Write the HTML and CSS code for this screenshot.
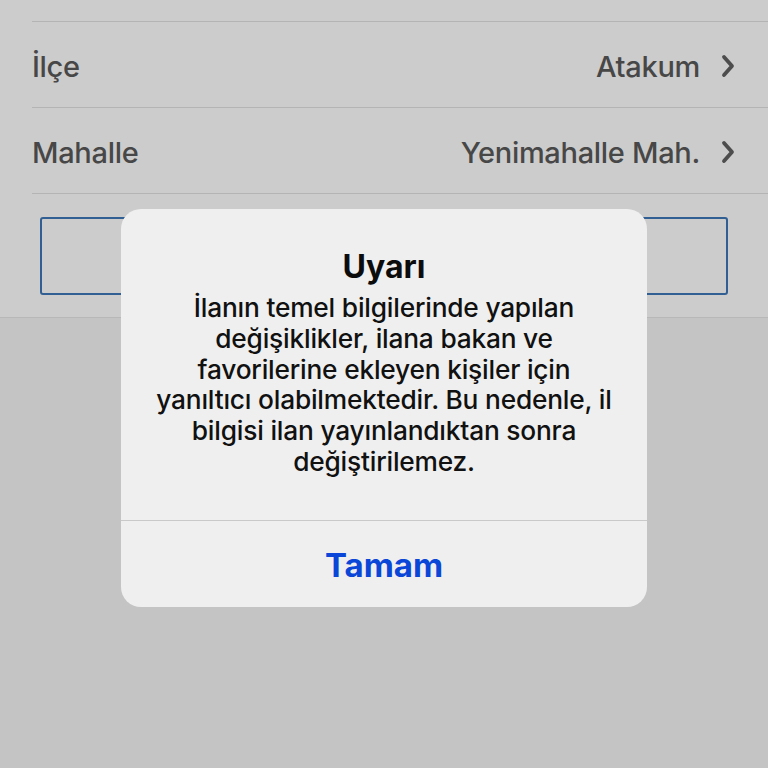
FILE: index.html
```html
<!DOCTYPE html>
<html lang="tr">
<head>
<meta charset="utf-8">
<link rel="stylesheet" href="styles.css">
</head>
<body>
<div class="screen">
  <div class="list">
    <div class="row row-cut"></div>
    <div class="row">
      <span class="label">İlçe</span>
      <span class="value">Atakum
        <svg class="chev" viewBox="0 0 16 24" width="16" height="24"><path d="M4 3 L12 12 L4 21" fill="none" stroke="#4d4d4d" stroke-width="3.8" stroke-linecap="round" stroke-linejoin="round"/></svg>
      </span>
    </div>
    <div class="row">
      <span class="label">Mahalle</span>
      <span class="value">Yenimahalle Mah.
        <svg class="chev" viewBox="0 0 16 24" width="16" height="24"><path d="M4 3 L12 12 L4 21" fill="none" stroke="#4d4d4d" stroke-width="3.8" stroke-linecap="round" stroke-linejoin="round"/></svg>
      </span>
    </div>
  </div>
  <div class="actions">
    <div class="outline-btn"></div>
  </div>
  <div class="rest"></div>

  <div class="alert">
    <div class="alert-body">
      <div class="alert-title">Uyarı</div>
      <div class="alert-msg">İlanın temel bilgilerinde yapılan<br>değişiklikler, ilana bakan ve<br>favorilerine ekleyen kişiler için<br>yanıltıcı olabilmektedir. Bu nedenle, il<br>bilgisi ilan yayınlandıktan sonra<br>değiştirilemez.</div>
    </div>
    <div class="alert-btn">Tamam</div>
  </div>
</div>
</body>
</html>
```
FILE: styles.css
```css
html, body {
  margin: 0;
  padding: 0;
}
body {
  width: 768px;
  height: 768px;
  overflow: hidden;
  font-family: Inter, "Noto Sans", "Liberation Sans", sans-serif;
  background: #c4c4c4;
}
.screen {
  position: relative;
  width: 768px;
  height: 768px;
  display: flex;
  flex-direction: column;
}
.list {
  background: #cccccc;
  padding-left: 32px;
}
.row {
  height: 85px;
  border-bottom: 1px solid #b4b4b4;
  display: flex;
  align-items: center;
  justify-content: space-between;
  padding-right: 32px;
}
.row-cut {
  height: 21px;
}
.label,
.value {
  font-size: 29px;
  font-weight: 500;
  color: #474747;
  letter-spacing: -0.3px;
  padding-top: 3px;
}
.value {
  display: flex;
  align-items: center;
  gap: 20px;
}
.chev {
  display: block;
}
.actions {
  background: #cccccc;
  padding: 23px 40px 22px 40px;
  border-bottom: 1px solid #b8b8b8;
}
.outline-btn {
  height: 74px;
  border: 2px solid #315f94;
  border-radius: 3px;
}
.rest {
  flex: 1;
  background: #c4c4c4;
}
.alert {
  position: absolute;
  left: 121px;
  top: 209px;
  width: 526px;
  height: 398px;
  background: #efefef;
  border-radius: 20px;
  display: flex;
  flex-direction: column;
  overflow: hidden;
}
.alert-body {
  height: 312px;
  box-sizing: border-box;
  padding: 40px 12px 0 12px;
  text-align: center;
  border-bottom: 1px solid #c9c9c9;
}
.alert-title {
  font-size: 32px;
  font-weight: 700;
  color: #0c0c0c;
  line-height: 36px;
  margin-bottom: 8px;
}
.alert-msg {
  font-size: 26.3px;
  line-height: 30.8px;
  color: #111111;
  font-weight: 500;
  letter-spacing: -0.2px;
}
.alert-btn {
  flex: 1;
  display: flex;
  align-items: center;
  justify-content: center;
  font-size: 33px;
  font-weight: 700;
  color: #0a46d8;
  padding-top: 2px;
}
```
